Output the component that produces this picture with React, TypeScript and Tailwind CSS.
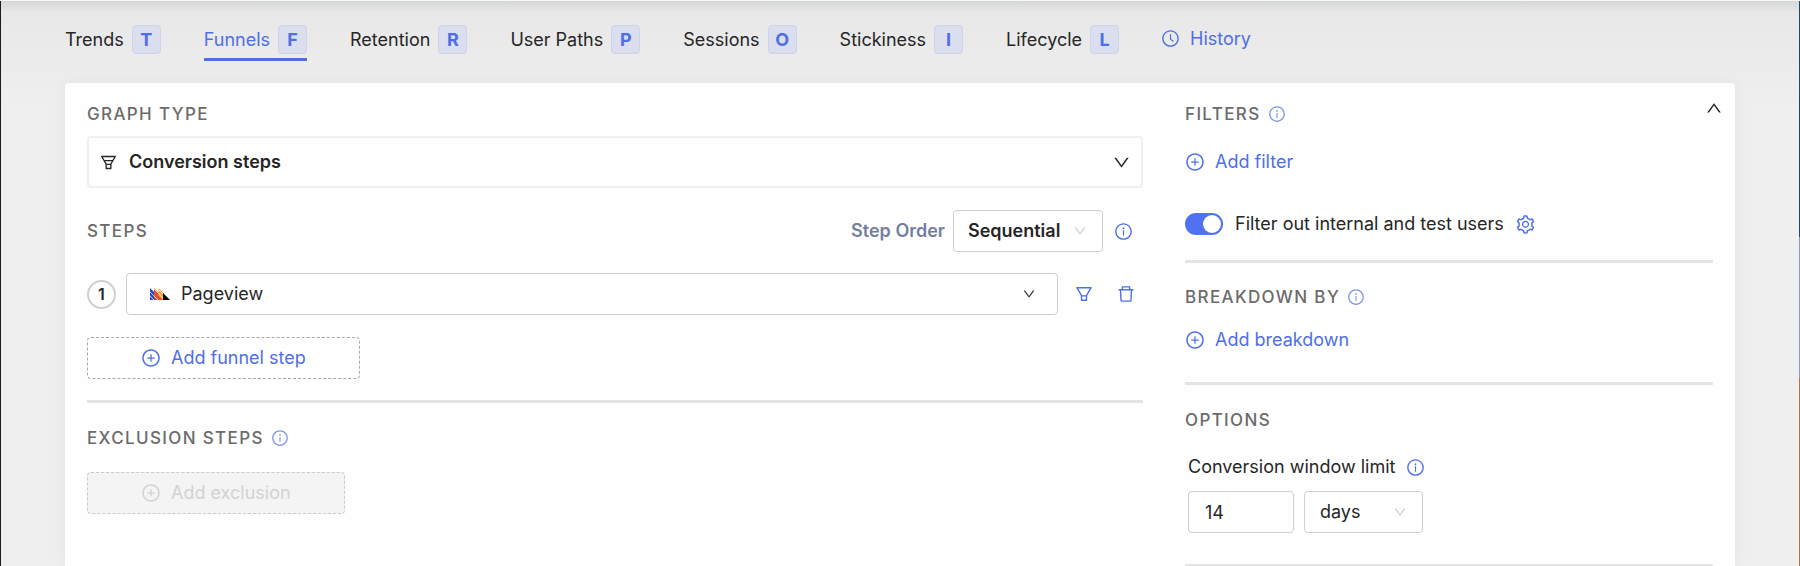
import type { ReactNode } from "react";
import {
  AiOutlineClockCircle,
  AiOutlineDelete,
  AiOutlineDown,
  AiOutlineFilter,
  AiOutlineFunnelPlot,
  AiOutlineInfoCircle,
  AiOutlinePlusCircle,
  AiOutlineSetting,
  AiOutlineUp,
} from "react-icons/ai";

const tabs = [
  { name: "Trends", hotkey: "T" },
  { name: "Funnels", hotkey: "F" },
  { name: "Retention", hotkey: "R" },
  { name: "User Paths", hotkey: "P" },
  { name: "Sessions", hotkey: "O" },
  { name: "Stickiness", hotkey: "I" },
  { name: "Lifecycle", hotkey: "L" },
];

function Tab({ name, hotkey, active }: { name: string; hotkey: string; active: boolean }) {
  return (
    <button
      type="button"
      role="tab"
      aria-selected={active}
      className={
        active
          ? "flex items-center gap-2 border-b-3 border-[#4f6fe8] pb-1 text-[#4f6fe8]"
          : "flex items-center gap-2 border-b-3 border-transparent pb-1 text-[#262626]"
      }
    >
      {name}
      <span className="flex size-[29px] items-center justify-center rounded border border-[#ced4ea] bg-[#dadeee] font-bold text-[#4f6fe8]">
        {hotkey}
      </span>
    </button>
  );
}

function Heading({ children, info }: { children: ReactNode; info?: boolean }) {
  return (
    <h2 className="flex h-6 items-center gap-[7px] text-[17px] font-medium tracking-[0.08em] text-[#6b6b6b] uppercase">
      {children}
      {info && <AiOutlineInfoCircle className="size-[18px] text-[#8094e0]" />}
    </h2>
  );
}

function LinkButton({ children }: { children: ReactNode }) {
  return (
    <button type="button" className="flex h-6 items-center gap-[10px] text-[#4f6fe8]">
      <AiOutlinePlusCircle className="size-5" />
      {children}
    </button>
  );
}

function Divider() {
  return <hr className="border-t-3 border-[#e4e4e4]" />;
}

function EventLogo() {
  return (
    <svg viewBox="0 0 40 24" className="h-3 w-5" aria-hidden="true">
      <path d="M0 0 24 24H0Z" fill="#2b48d8" />
      <path d="M8 0 30 24H11L8 20Z" fill="#e8502a" />
      <path d="M17 0 28 11V24H25L17 15Z" fill="#f5a53c" />
      <path d="M0 8 16 24M0 16 8 24M8 2 28 22M17 3 28 14" stroke="#fff" strokeWidth="1.4" />
      <path d="M26 10 40 24H26Z" fill="#000" />
    </svg>
  );
}

export default function App() {
  return (
    <div className="flex min-h-screen border-t border-t-[#f6f6f6] bg-[#efefef] font-['Inter',sans-serif] text-[18px] leading-6 text-[#262626]">
      <div className="w-px bg-[#1c1c1c]" />
      <div className="flex grow flex-col bg-linear-to-b from-[#d6d8d7] via-[#e7e8e7] via-[12px] to-[#efefef] to-[110px] px-16 pt-6">
        <nav className="flex items-start gap-[42px]">
          <div role="tablist" className="flex gap-[43px]">
            {tabs.map((t) => (
              <Tab key={t.name} name={t.name} hotkey={t.hotkey} active={t.name === "Funnels"} />
            ))}
          </div>
          <a href="#history" className="flex h-[27px] items-center gap-[10px] text-[#4f6fe8]">
            <AiOutlineClockCircle className="size-[19px]" />
            History
          </a>
        </nav>

        <main className="mt-[22px] grid grow grid-cols-[2fr_1fr] gap-[42px] rounded-t bg-[#fefefe] px-[22px] pt-[19px] shadow-[0_0_16px_rgba(0,0,0,0.05)]">
          <section>
            <Heading>Graph type</Heading>
            <button
              type="button"
              className="mt-[10px] flex h-[52px] w-full items-center gap-[11px] rounded border-2 border-[#f0f0f0] px-[10px] font-semibold"
            >
              <AiOutlineFunnelPlot className="size-[19px]" />
              Conversion steps
              <AiOutlineDown className="ml-auto size-[19px]" />
            </button>

            <div className="mt-[22px] flex items-center">
              <Heading>Steps</Heading>
              <label htmlFor="step-order" className="ml-auto font-semibold text-[#747ea1]">
                Step Order
              </label>
              <span className="ml-2 grid h-[42px] w-[150px] items-center">
                <select
                  id="step-order"
                  className="col-start-1 row-start-1 h-full w-full appearance-none rounded border border-[#cfcfcf] bg-white px-[14px] font-semibold"
                >
                  <option>Sequential</option>
                </select>
                <AiOutlineDown className="pointer-events-none col-start-1 row-start-1 mr-4 size-[14px] justify-self-end text-[#c8c8c8]" />
              </span>
              <AiOutlineInfoCircle className="mr-[10px] ml-[11px] size-[19px] text-[#4f6fe8]" />
            </div>

            <div className="mt-[21px] flex items-center">
              <span className="flex size-[29px] items-center justify-center rounded-full border-2 border-[#d0d0d0] text-[16px] font-semibold">
                1
              </span>
              <button
                type="button"
                className="ml-[10px] flex h-[42px] grow items-center gap-[11px] rounded border border-[#cfcfcf] bg-white pr-[21px] pl-[23px]"
              >
                <EventLogo />
                Pageview
                <AiOutlineDown className="ml-auto size-[14px]" />
              </button>
              <button type="button" aria-label="Filter step" className="ml-4 text-[#4f6fe8]">
                <AiOutlineFilter className="size-5" />
              </button>
              <button type="button" aria-label="Delete step" className="mr-[7px] ml-[22px] text-[#4f6fe8]">
                <AiOutlineDelete className="size-5" />
              </button>
            </div>

            <button
              type="button"
              className="mt-[22px] mb-[21px] flex h-[42px] items-center gap-[10px] rounded border border-dashed border-[#a8a8a8] px-[53px] text-[#4f6fe8]"
            >
              <AiOutlinePlusCircle className="size-5" />
              Add funnel step
            </button>
            <Divider />
            <div className="mt-[23px]">
              <Heading info>Exclusion steps</Heading>
            </div>
            <button
              type="button"
              disabled
              className="mt-[22px] flex h-[42px] items-center gap-[10px] rounded border border-dashed border-[#cacaca] bg-[#f4f4f4] px-[53px] text-[#d2d2d2]"
            >
              <AiOutlinePlusCircle className="size-5" />
              Add exclusion
            </button>
          </section>

          <section>
            <div className="flex items-start justify-between">
              <Heading info>Filters</Heading>
              <button type="button" aria-label="Collapse" className="-mt-[3px] -mr-[10px]">
                <AiOutlineUp className="size-[18px]" />
              </button>
            </div>
            <div className="mt-6 mb-[38px]">
              <LinkButton>Add filter</LinkButton>
            </div>
            <div className="mb-6 flex h-6 items-center">
              <label className="flex items-center gap-3">
                <input type="checkbox" role="switch" defaultChecked className="peer sr-only" />
                <span className="flex h-[22px] w-[38px] items-center justify-end rounded-full bg-[#5072f0] p-[2px]">
                  <span className="size-[18px] rounded-full bg-white" />
                </span>
                Filter out internal and test users
              </label>
              <button type="button" aria-label="Settings" className="ml-[11px] text-[#4f6fe8]">
                <AiOutlineSetting className="size-[21px]" />
              </button>
            </div>
            <Divider />
            <div className="mt-[22px] mb-[19px]">
              <Heading info>Breakdown by</Heading>
            </div>
            <LinkButton>Add breakdown</LinkButton>
            <div className="mt-[30px] mb-[23px]">
              <Divider />
            </div>
            <Heading>Options</Heading>
            <div className="mt-[23px] mb-[31px] px-[3px]">
              <div className="flex items-center gap-[11px]">
                <label htmlFor="window-limit">Conversion window limit</label>
                <AiOutlineInfoCircle className="size-[19px] text-[#4f6fe8]" />
              </div>
              <div className="mt-3 flex gap-[10px]">
                <input
                  id="window-limit"
                  defaultValue="14"
                  className="h-[42px] w-[106px] rounded border border-[#cfcfcf] bg-white px-4"
                />
                <span className="grid h-[42px] w-[119px] items-center">
                  <select
                    aria-label="Window unit"
                    className="col-start-1 row-start-1 h-full w-full appearance-none rounded border border-[#cfcfcf] bg-white px-[15px]"
                  >
                    <option>days</option>
                  </select>
                  <AiOutlineDown className="pointer-events-none col-start-1 row-start-1 mr-4 size-[14px] justify-self-end text-[#c8c8c8]" />
                </span>
              </div>
            </div>
            <Divider />
          </section>
        </main>
      </div>
      <div className="flex w-px flex-col">
        <div className="grow-5 bg-[#1d4a6b]" />
        <div className="grow-3 bg-[#8a9cb4]" />
        <div className="grow-4 bg-[#b0744a]" />
      </div>
    </div>
  );
}
